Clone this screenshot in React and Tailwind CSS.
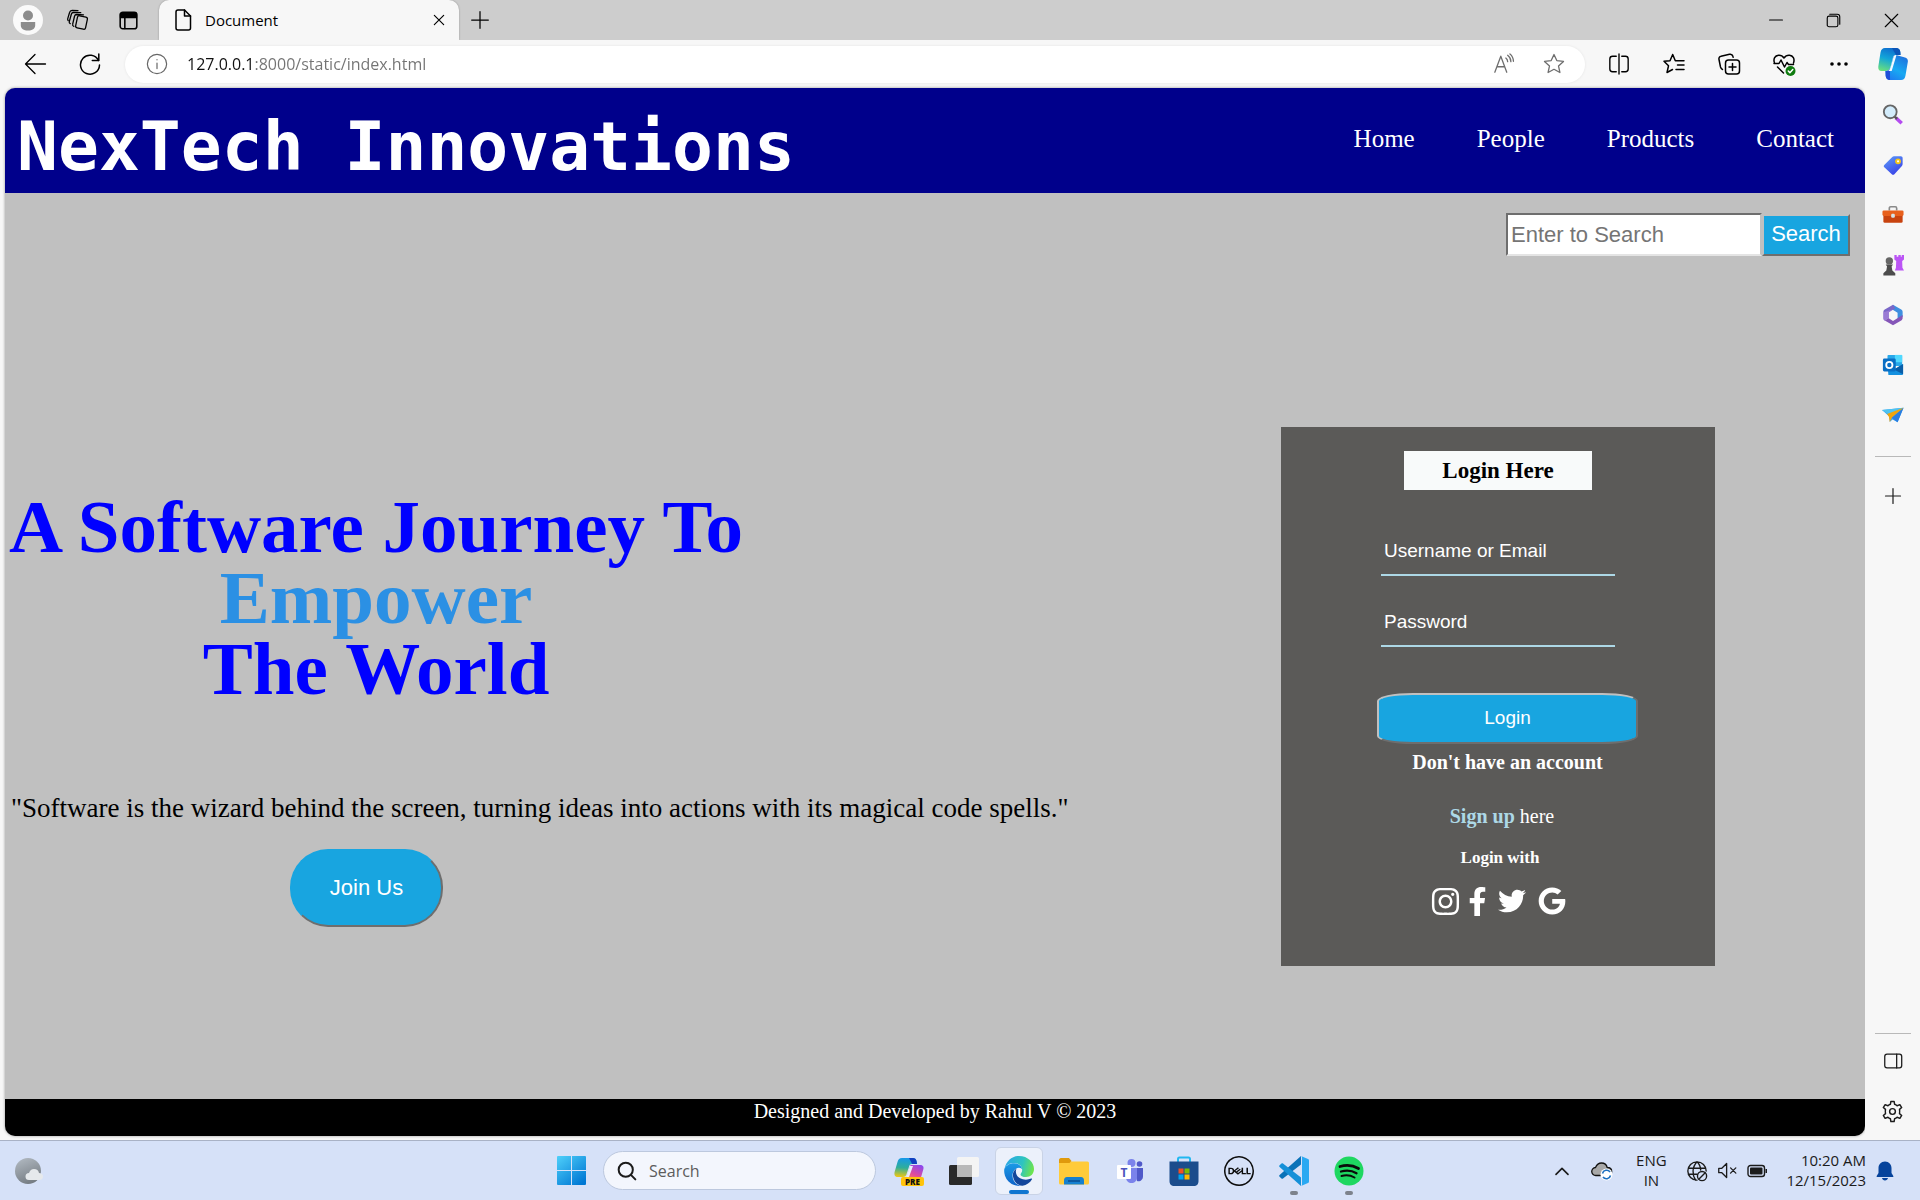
import React from "react";
import { FaInstagram, FaFacebookF, FaTwitter, FaGoogle } from "react-icons/fa";
import { SiDell } from "react-icons/si";

const SANS = "font-['Open_Sans','Noto_Sans',sans-serif]";
const ARIAL = "font-['Liberation_Sans',Arial,sans-serif]";
const TIMES = "font-['Liberation_Serif','Times_New_Roman',serif]";

/* Thin line icon on a 24 unit grid */
function Line({ size = 24, width = 1.4, children, className }) {
  return (
    <svg width={size} height={size} viewBox="0 0 24 24" fill="none" stroke="currentColor" strokeWidth={width} strokeLinecap="round" strokeLinejoin="round" className={className} aria-hidden="true">
      {children}
    </svg>
  );
}

function IconButton({ label, children, className = "" }) {
  return (
    <button type="button" aria-label={label} className={`flex shrink-0 items-center justify-center ${className}`}>
      {children}
    </button>
  );
}

const STAR = "M12 2.5l2.8 6.1 6.7.8-5 4.5 1.4 6.6L12 17.3l-5.9 3.2 1.4-6.6-5-4.5 6.7-.8z";

function TitleBar() {
  return (
    <div className="flex h-10 items-stretch bg-[#cdcdcd] text-black">
      <div className="flex pl-[3px]">
        <IconButton label="Profile" className="w-[50px]">
          <svg width="30" height="30" viewBox="0 0 30 30" aria-hidden="true">
            <circle cx="15" cy="15" r="15" fill="#fafafa" />
            <circle cx="15" cy="10.5" r="5" fill="#8c8c8c" />
            <path d="M7.8 17h14.4v3.5c0 3-3 5-7.200 5s-7.200-2-7.200-5z" fill="#8c8c8c" />
          </svg>
        </IconButton>
        <IconButton label="Workspaces" className="w-[50px]">
          <Line width={1.4} size={22}>
            <rect x="10.500" y="8" width="11" height="13.500" rx="2" transform="rotate(12 16 14)" />
            <path d="M7.500 19c-1.200-.4-1.600-1.300-1.300-2.400l2-8.700c.3-1.100 1.100-1.900 2.300-1.900l7.500.3" />
            <path d="M3.500 16c-1.100-.5-1.300-1.300-1-2.400l2.300-8.100c.3-1 1.100-1.700 2.200-1.700l8 .2" />
            <path d="M1.300 12.500c-.6-.6-.7-1.300-.4-2.300L2.800 3.800C3.200 2.300 4 1.500 5.500 1.500L12 1.700" />
          </Line>
        </IconButton>
        <IconButton label="Tab actions" className="w-[50px]">
          <Line width={1.800} size={21}>
            <rect x="2.500" y="2.500" width="19" height="19" rx="3" />
            <path d="M3 4h18v4.500H3z" fill="currentColor" />
            <path d="M7.800 9v12" />
          </Line>
        </IconButton>
      </div>
      <div className="ml-1.5 flex w-[300px] items-center rounded-t-[10px] bg-[#f7f7f7] pr-2 pl-3 shadow-[0_0_2px_rgba(0,0,0,0.3)]">
        <Line width={1.500}>
          <path d="M5 4a2 2 0 0 1 2-2h6.500L19.500 8v12a2 2 0 0 1-2 2H7a2 2 0 0 1-2-2z" />
          <path d="M13.500 2v6h6" />
        </Line>
        <span className="ml-2.5 flex-1 text-[15px] leading-5">Document</span>
        <IconButton label="Close tab" className="size-6">
          <Line size={14} width={2}>
            <path d="M4 4l16 16M20 4L4 20" />
          </Line>
        </IconButton>
      </div>
      <IconButton label="New tab" className="w-[42px]">
        <Line size={20} width={1.500}>
          <path d="M12 2v20M2 12h20" />
        </Line>
      </IconButton>
      <div className="ml-auto flex">
        <IconButton label="Minimize" className="w-[57px]">
          <Line size={14} width={2}>
            <path d="M1 12h22" />
          </Line>
        </IconButton>
        <IconButton label="Restore" className="w-[58px]">
          <Line size={15} width={1.800}>
            <rect x="2" y="5" width="17" height="17" rx="3" />
            <path d="M6 2h12a4 4 0 0 1 4 4v12" />
          </Line>
        </IconButton>
        <IconButton label="Close" className="w-[58px]">
          <Line size={15} width={1.800}>
            <path d="M2 2l20 20M22 2L2 22" />
          </Line>
        </IconButton>
      </div>
    </div>
  );
}

function CopilotIcon() {
  return (
    <svg width="30" height="32" viewBox="0 0 30 32" aria-hidden="true">
      <defs>
        <linearGradient id="cpA" x1="0.500" y1="0" x2="0.200" y2="1">
          <stop offset="0" stopColor="#0f6fd0" />
          <stop offset="0.450" stopColor="#12a5d8" />
          <stop offset="1" stopColor="#6be07c" />
        </linearGradient>
        <linearGradient id="cpB" x1="0.800" y1="0" x2="0.300" y2="1">
          <stop offset="0" stopColor="#1f6fdc" />
          <stop offset="0.600" stopColor="#18a9f2" />
          <stop offset="1" stopColor="#1e7ff0" />
        </linearGradient>
      </defs>
      <path d="M7 0h11c2.500 0 4 1.500 4.300 4L22.500 7H18c-2 0-2.800 1-3.200 3l-2 8c-.7 3-2 4.500-4.800 5H3.500C1 23 0 21 .3 18.500L2.500 4.500C3 1.500 4.500 0 7 0z" fill="url(#cpA)" />
      <path d="M14 0h4c2.500 0 4 1.500 4.300 4L22.500 7H18z" fill="#0b55b8" />
      <path d="M23 32H12c-2.500 0-4-1.500-4.300-4L7.500 23c3 0 4.500-1.500 5.300-5l2-8c.5-2 1.500-2.800 3.200-3L27 9.500c2 .5 3.200 2 2.800 4.500L27.500 27.500C27 30.500 25.500 32 23 32z" fill="url(#cpB)" />
      <path d="M12 32c-2.500 0-4-1.500-4.300-4L7.500 23c2 0 3.500-.6 4.500-2.500z" fill="#1f4fd8" />
      <path d="M15.500 9c.6-1.500 1.500-2 3-2l-4.800 16h-3.500c1.500-1 2.200-2.800 2.800-5z" fill="#f4faff" />
    </svg>
  );
}

function Toolbar() {
  return (
    <div className="flex h-12 items-center bg-[#f7f7f7] text-black">
      <div className="flex pl-[7px]">
        <IconButton label="Back" className="h-9 w-[55px]">
          <Line width={1.300}>
            <path d="M2.500 12h20M12 2.500L2.500 12l9.500 9.500" />
          </Line>
        </IconButton>
        <IconButton label="Refresh" className="h-9 w-[55px]">
          <Line width={1.500}>
            <path d="M20.500 8.500A9.500 9.500 0 1 0 21.500 13" />
            <path d="M20.800 2v6.500h-6.500" />
          </Line>
        </IconButton>
      </div>
      <div className="ml-2 flex h-[37px] flex-1 items-center rounded-full bg-white pr-1.5 pl-[21px] shadow-[0_0_3px_rgba(0,0,0,0.08)]">
        <Line size={22} width={1.300} className="shrink-0 text-[#666]">
          <circle cx="12" cy="12" r="10.500" />
          <path d="M12 11v6M12 7.200v.2" />
        </Line>
        <input
          type="text"
          aria-label="Address"
          defaultValue="127.0.0.1:8000/static/index.html"
          className="ml-[19px] min-w-0 flex-1 bg-[linear-gradient(90deg,#111_66px,#737373_66px)] bg-clip-text text-[16px] text-transparent outline-none"
        />
        <IconButton label="Read aloud" className="w-[50px] text-[#6e6e6e]">
          <Line size={22} width={1.400}>
            <path d="M2 21 8.500 3.500 15 21M4.500 15h8M14 5.500c1.300 1 2 2.500 2 4M16 2.500c2.300 1.700 3.500 4 3.500 7M18.500 1c2.500 2 3.700 4.800 3.800 8" />
          </Line>
        </IconButton>
        <IconButton label="Add to favourites" className="w-[50px] text-[#6e6e6e]">
          <Line width={1.300}>
            <path d={STAR} />
          </Line>
        </IconButton>
      </div>
      <div className="flex pl-1.5">
        <IconButton label="Split screen" className="w-[55px]">
          <Line width={1.500} size={22}>
            <path d="M9 3.500H5a3 3 0 0 0-3 3v11a3 3 0 0 0 3 3h4M15 3.500h4a3 3 0 0 1 3 3v11a3 3 0 0 1-3 3h-4M12 1v22" />
          </Line>
        </IconButton>
        <IconButton label="Favourites" className="w-[55px]">
          <Line width={1.500}>
            <path d="M13.500 8.700h-.2L10.700 2.500 8 8.700l-6 .6 4.500 4.500L5 20.500l5.500-3M13.500 8.700H22M15.500 13H22M14 17.500h8" />
          </Line>
        </IconButton>
        <IconButton label="Collections" className="w-[55px]">
          <Line width={1.500}>
            <rect x="8.500" y="8" width="14" height="14" rx="3" />
            <path d="M15.500 11.500v7M12 15h7M5.500 17.500C4.300 17 3.800 16 3.500 15L2 7.500C1.600 5.700 2.500 4.500 4 4.200l8.500-1.900c1.700-.3 3 .4 3.400 2l.3 1" />
          </Line>
        </IconButton>
        <IconButton label="Browser essentials" className="w-[55px]">
          <Line width={1.500}>
            <path d="M2.500 11C1 7 3 3.500 6.500 3.200 9 3 11 4.500 12 6c1-1.500 3-3 5.500-2.800C21 3.500 23 7 21.500 11M5.500 15l6 6M2 11.500h5l2-3.500 3.500 7 2.500-4.500 1.500 2h5" />
            <circle cx="18.500" cy="19" r="5" fill="#107c10" stroke="none" />
            <path d="M16.300 19l1.600 1.700 2.900-3.200" stroke="#fff" />
          </Line>
        </IconButton>
        <IconButton label="Settings and more" className="w-[55px]">
          <svg width="18" height="4" viewBox="0 0 18 4" aria-hidden="true">
            <circle cx="2" cy="2" r="1.800" />
            <circle cx="9" cy="2" r="1.800" />
            <circle cx="16" cy="2" r="1.800" />
          </svg>
        </IconButton>
        <IconButton label="Copilot" className="w-[54px]">
          <CopilotIcon />
        </IconButton>
      </div>
    </div>
  );
}

const sideIcons = [
  {
    label: "Search",
    art: (
      <>
        <path d="M15 15l6.500 6" stroke="#b44cf0" strokeWidth="4" />
        <path d="M13.500 13.500l3 2.800" stroke="#555" strokeWidth="2.500" />
        <circle cx="9" cy="8.500" r="7" fill="#d3ecfb" stroke="#666" strokeWidth="2" />
      </>
    ),
  },
  {
    label: "Shopping",
    art: (
      <>
        <path d="M13 2.500h7.500c1.200 0 2 .8 2 2V11c0 .8-.3 1.500-.8 2L13.500 22c-.8.800-2 .8-2.800 0L2.500 14.500c-.8-.8-.7-1.800 0-2.600l8.700-8.700c.5-.5 1.100-.7 1.800-.7z" fill="url(#tagG)" />
        <circle cx="17.500" cy="8" r="2.200" fill="#fff" stroke="#f5c518" strokeWidth="2" />
      </>
    ),
  },
  {
    label: "Tools",
    art: (
      <>
        <path d="M8 7V4.500c0-.8.700-1.500 1.500-1.500h5c.8 0 1.500.7 1.500 1.500V7" fill="none" stroke="#8a8a8a" strokeWidth="1.800" />
        <rect x="1.500" y="11" width="21" height="9.500" rx="1.500" fill="#c8430f" />
        <rect x="0.500" y="7" width="23" height="6" rx="1.500" fill="#e8601c" />
        <rect x="10" y="10.500" width="4" height="4.500" rx="1.500" fill="#d5e3e6" />
      </>
    ),
  },
  {
    label: "Games",
    art: (
      <>
        <path d="M13.500 1h2.500v2h1.800V1h2.700v2h1V1H24v5l-2 1.500.3 7.500 1.700 3H14l1.200-3 .3-7.500-2-1.500z" fill="#bb55f5" />
        <circle cx="8" cy="7.500" r="4" fill="#666" />
        <path d="M4 11.500h8l-1.500 2 .8 4.500 3.200 3v2.500H1.500V21l3.200-3 .8-4.500z" fill="#4c4c4c" />
      </>
    ),
  },
  {
    label: "Microsoft 365",
    art: (
      <>
        <path d="M12 .8 21 6c1 .6 1.500 1.500 1.500 2.600V14l-5.500 3V9.500L9.500 5z" fill="#3f8fe0" />
        <path d="M12 .8 3 6C2 6.600 1.500 7.500 1.500 8.600V15.500c0 1.100.5 2 1.500 2.600l4.500-3V9l7-4.500z" fill="#7a67c8" />
        <path d="M3 18l9 5.300 9-5.300c1-.6 1.500-1.500 1.500-2.600V12L12 18.500l-5-3.300z" fill="#8556b8" />
        <path d="M1.500 9v6.500c0 1.100.5 2 1.500 2.600l4.500-3V9L12 6z" fill="#a884d8" opacity="0.700" />
        <path d="M12 7.800l4 2.200v4.300l-4 2.400-4-2.400V10z" fill="#f7f7f7" />
      </>
    ),
  },
  {
    label: "Outlook",
    art: (
      <>
        <rect x="6" y="1" width="16" height="12" rx="1" fill="#28a8ea" />
        <path d="M14 1h8v8h-8z" fill="#50d9ff" />
        <path d="M6 12l9 4 8-5v10.500c0 .8-.6 1.500-1.500 1.500H7z" fill="#1490df" />
        <path d="M13 17l10-6v11z" fill="#0a5ea8" />
        <rect x="1" y="5" width="14" height="14" rx="1.500" fill="#0a6fc4" />
        <circle cx="8" cy="12" r="3.400" fill="none" stroke="#fff" strokeWidth="2" />
      </>
    ),
  },
  {
    label: "Drop",
    art: (
      <>
        <path d="M0 6.500 23.500 4 17 20l-5.500-3-3 2.500-.5-6z" fill="#35a4f4" />
        <path d="M0 6.500 23.500 4 8 12z" fill="#4fc3f0" />
        <path d="M23.500 4 17 20l-6.500-5z" fill="#2a7de0" />
        <path d="M23.500 4 5.500 11l2 3 1 5.500 2.500-5z" fill="#f0a40a" />
      </>
    ),
  },
];

function SideBar() {
  return (
    <aside aria-label="Sidebar" className="flex w-[55px] shrink-0 flex-col items-center bg-[#f7f7f7] pt-0.5 text-[#1b1b1b]">
      {sideIcons.map((i) => (
        <IconButton key={i.label} label={i.label} className="h-[50px] w-full">
          <svg width="22" height="22" viewBox="0 0 24 24" aria-hidden="true">
            <defs>
              <linearGradient id="tagG" x1="0" y1="0" x2="0.600" y2="1">
                <stop offset="0" stopColor="#5ea0f8" />
                <stop offset="1" stopColor="#3a44e8" />
              </linearGradient>
            </defs>
            {i.art}
          </svg>
        </IconButton>
      ))}
      <hr className="mt-4 w-9 border-[#b9b9b9]" />
      <IconButton label="Customize" className="mt-3.5 h-[50px] w-full">
        <Line size={18} width={1.600}>
          <path d="M12 2v20M2 12h20" />
        </Line>
      </IconButton>
      <hr className="mt-auto w-9 border-[#b9b9b9]" />
      <IconButton label="Hide sidebar" className="mt-0.5 h-[50px] w-full">
        <Line size={22} width={1.400}>
          <rect x="3" y="4.500" width="18.500" height="15" rx="2.500" />
          <path d="M16 4.500v15" />
        </Line>
      </IconButton>
      <IconButton label="Settings" className="h-[50px] w-full">
        <Line size={23} width={1.500}>
          <path d="M9.800 4.500 10.300 1.500h3.400l.5 3c1 .3 1.900.8 2.600 1.500l2.900-1.100 1.900 3-2.300 1.900c.3 1.500.3 2.900 0 4.400l2.300 1.900-1.900 3-2.900-1.100c-.7.7-1.600 1.200-2.600 1.500l-.5 3h-3.400l-.5-3c-1-.3-1.900-.8-2.600-1.500l-2.900 1.100-1.900-3 2.300-1.900c-.3-1.500-.3-2.900 0-4.400L2.400 7.900l1.900-3L7.200 6c.7-.7 1.600-1.200 2.600-1.500z" />
          <circle cx="12" cy="12" r="3" />
        </Line>
      </IconButton>
    </aside>
  );
}

function LoginPanel() {
  return (
    <form onSubmit={(e) => e.preventDefault()} className={`mt-[171px] mr-[150px] flex w-[434px] shrink-0 flex-col items-center self-start bg-[#5b5a58] pt-6 pb-[49px] text-white ${TIMES}`}>
      <h2 className="w-[188px] bg-[#f8fafa] text-center text-[23px] leading-[39px] font-bold text-black">Login Here</h2>
      <input type="text" aria-label="Username or Email" placeholder="Username or Email" className={`mt-9 h-[50px] w-[234px] border-b-2 border-[#add8e6] bg-transparent px-[3px] pt-0.5 text-[19px] placeholder-white outline-none ${ARIAL}`} />
      <input type="password" aria-label="Password" placeholder="Password" className={`mt-[21px] h-[50px] w-[234px] border-b-2 border-[#add8e6] bg-transparent px-[3px] pt-0.5 text-[19px] placeholder-white outline-none ${ARIAL}`} />
      <div className="mt-[46px] ml-[19px] flex flex-col items-center">
        <button type="submit" className={`h-[51px] w-[261px] rounded-[36px/8px] border-2 border-t-[#c0c0c0] border-r-[#6e6e6e] border-b-[#6e6e6e] border-l-[#c0c0c0] bg-[#18a5e0] text-[19px] ${ARIAL}`}>Login</button>
        <p className="mt-1.5 text-[20px] leading-6 font-bold">Don't have an account</p>
      </div>
      <p className="mt-[30px] ml-2 text-[20px] leading-6">
        <a href="#signup" className="font-bold text-[#add8e6]">Sign up</a> here
      </p>
      <p className="mt-[18px] ml-1 text-[17px] leading-6 font-bold">Login with</p>
      <div className="mt-[15px] flex h-8 items-center gap-2">
        <a href="#instagram" aria-label="Instagram"><FaInstagram size={31} /></a>
        <a href="#facebook" aria-label="Facebook"><FaFacebookF size={29} className="-mx-1.5" /></a>
        <a href="#twitter" aria-label="Twitter" className="ml-1"><FaTwitter size={28} /></a>
        <a href="#google" aria-label="Google" className="ml-1"><FaGoogle size={28} /></a>
      </div>
    </form>
  );
}

function Page() {
  return (
    <div className={`flex min-w-0 flex-1 flex-col overflow-hidden rounded-[10px] bg-[#c0c0c0] shadow-[0_0_3px_rgba(0,0,0,0.4)] ${TIMES}`}>
      <header className="flex h-[105px] items-center justify-between bg-[#00008b] pr-[31px] pl-3 text-white">
        <h1 className="pt-3 font-['DejaVu_Sans_Mono',monospace] text-[68px] leading-[80px] font-bold">NexTech Innovations</h1>
        <nav className="flex gap-[62px] pb-1 text-[25px] leading-7">
          <a href="#home">Home</a>
          <a href="#people">People</a>
          <a href="#products">Products</a>
          <a href="#contact">Contact</a>
        </nav>
      </header>
      <main className="flex flex-1 flex-col">
        <form onSubmit={(e) => e.preventDefault()} className={`mt-5 flex items-center justify-end pr-[15px] text-[22px] ${ARIAL}`}>
          <input type="text" aria-label="Enter to Search" placeholder="Enter to Search" className="h-[43px] w-[256px] border-2 border-t-[#6e6e6e] border-r-[#c0c0c0] border-b-[#e4e4e4] border-l-[#6e6e6e] bg-white px-[3px] placeholder-[#757575] outline-none" />
          <button type="submit" className="h-[42px] w-[88px] border-2 border-t-[#c0c0c0] border-r-[#6e6e6e] border-b-[#6e6e6e] border-l-[#c0c0c0] bg-[#18a5e0] pb-0.5 leading-8 text-white">Search</button>
        </form>
        <div className="flex flex-1 justify-between">
          <section className="mt-[235px]">
            <h2 className="ml-1 w-fit text-center text-[75px] leading-[71px] font-bold text-[#0000ff]">
              A Software Journey To
              <br />
              <span className="text-[#2b90e4]">Empower</span>
              <br />
              The World
            </h2>
            <p className="mt-[88px] ml-[6px] text-[27px] leading-8 text-black">"Software is the wizard behind the screen, turning ideas into actions with its magical code spells."</p>
            <button type="button" className={`mt-[25px] ml-[285px] h-[78px] w-[153px] rounded-[38px] border-2 border-t-[#18a5e0] border-r-[#6e6e6e] border-b-[#6e6e6e] border-l-[#18a5e0] bg-[#18a5e0] pb-0.5 text-[22px] text-white ${ARIAL}`}>Join Us</button>
          </section>
          <LoginPanel />
        </div>
      </main>
      <footer className="h-[37px] bg-black text-center text-[20px] leading-6 text-white">Designed and Developed by Rahul V © 2023</footer>
    </div>
  );
}

const apps = [
  {
    label: "Copilot preview",
    art: (
      <>
        <defs>
          <linearGradient id="prA" x1="0.300" y1="0" x2="0.200" y2="1">
            <stop offset="0" stopColor="#1798e8" />
            <stop offset="0.500" stopColor="#2fae9a" />
            <stop offset="1" stopColor="#f2c811" />
          </linearGradient>
          <linearGradient id="prB" x1="0.800" y1="0" x2="0.200" y2="1">
            <stop offset="0" stopColor="#8c48ee" />
            <stop offset="0.600" stopColor="#e04c9c" />
            <stop offset="1" stopColor="#ff8450" />
          </linearGradient>
        </defs>
        <path d="M8 2h11c2 0 3 1 3.500 3l.6 3h-5c-2 0-2.700 1-3.200 3l-2 6c-.8 3-2 4-4 4H4c-3 0-4-2-3.400-5L3.500 6C4.200 3.400 5.400 2 8 2z" fill="url(#prA)" />
        <path d="M15 2h4c2 0 3 1 3.500 3l.6 3h-5z" fill="#123fc0" />
        <path d="M16.500 9H26c3 0 4 2 3.400 4l-2 7c-.7 2.600-2.400 3.500-4.400 3.500H10c2-1 3-2.500 3.500-4.500z" fill="url(#prB)" />
        <path d="M16 10h3l-4 11h-2.500z" fill="#e8effc" />
        <rect x="7" y="21" width="23" height="9" rx="2" fill="#ffc40c" />
        <text x="18.500" y="28.500" textAnchor="middle" fontSize="8" fontWeight="800" fontFamily="Open Sans, sans-serif" fill="#111">PRE</text>
      </>
    ),
  },
  {
    label: "Task view",
    art: (
      <>
        <rect x="0" y="9" width="23" height="20" rx="1.500" fill="#2a2a2a" />
        <rect x="8" y="1" width="22" height="20" rx="1.500" fill="#f4f4f4" />
        <path d="M8 9h15v12H8z" fill="#b9b9b9" />
      </>
    ),
  },
  {
    label: "Edge",
    active: true,
    art: (
      <>
        <defs>
          <linearGradient id="edA" x1="0" y1="0.300" x2="1" y2="0.500">
            <stop offset="0" stopColor="#2aa6e8" />
            <stop offset="0.600" stopColor="#2ec4c0" />
            <stop offset="1" stopColor="#6ee44c" />
          </linearGradient>
          <linearGradient id="edB" x1="0.500" y1="0" x2="0.500" y2="1">
            <stop offset="0" stopColor="#1a9be6" />
            <stop offset="1" stopColor="#0f62c8" />
          </linearGradient>
        </defs>
        <path d="M.5 13C2 5 8 0 15 0c9 0 15 6.500 15 13 0 5-3.500 8-8 8-3.500 0-5.500-1.300-5.500-2.600 0-1 1.700-1.700 1.700-4.400C18.200 9.500 14 7 9.500 7 5 7 2 9.500.5 13z" fill="url(#edA)" />
        <path d="M.3 13C2.500 9 6 7.300 10 7.300c4.500 0 8 2.700 8.200 6.200-.5-1-1.700-1.700-3.200-1.700-4 0-6.500 4-6.500 8 0 5 3.500 9 8.500 10A15 15 0 0 1 .3 13z" fill="url(#edB)" />
        <path d="M12.500 12.500c-3 2-4 5-3.500 8 .8 5.500 5 9.400 9.500 9.200 4-.7 7.500-3 9.500-6.500.3-.6-.3-1-.8-.7-5.700 2.600-12.700.5-14.700-4-.9-2-.8-4.300 0-6z" fill="#12469c" />
      </>
    ),
  },
  {
    label: "File Explorer",
    art: (
      <>
        <rect x="0" y="5.500" width="30" height="23" rx="1.500" fill="#ffcb3a" />
        <path d="M0 4c0-1 .7-2 2-2h8l2.500 3-2 2H0z" fill="#e09a0c" />
        <path d="M5 28.500v-4c0-2 1-3.500 3-3.500h14c2 0 3 1.500 3 3.500v4z" fill="#1580d0" />
        <path d="M9 25h12" stroke="#0a4c90" strokeWidth="1.500" />
      </>
    ),
  },
  {
    label: "Teams",
    art: (
      <>
        <circle cx="17.500" cy="7" r="4" fill="#7b83eb" />
        <circle cx="25.500" cy="8" r="2.800" fill="#5059c9" />
        <path d="M20 12h9v8c0 4-3 6-6 5z" fill="#5059c9" />
        <path d="M12 12h11v9c0 4-2.500 6-5.500 6S12 25 12 21z" fill="#7b83eb" />
        <rect x="3" y="9" width="14" height="14" rx="1" fill="#fff" />
        <text x="10" y="20.500" textAnchor="middle" fontSize="12" fontWeight="700" fontFamily="Open Sans, sans-serif" fill="#4b53bc">T</text>
      </>
    ),
  },
  {
    label: "Microsoft Store",
    art: (
      <>
        <path d="M9 6V3c0-1 .5-1.500 1.500-1.500h9c1 0 1.500.5 1.500 1.500v3" fill="none" stroke="#22b8f0" strokeWidth="2" />
        <path d="M.5 5.500h29V25c0 3-1.500 5-5 5h-19c-3.500 0-5-2-5-5z" fill="#1b4c8c" />
        <path d="M9.500 12.500h5v5h-5z" fill="#f25022" />
        <path d="M15.500 12.500h5v5h-5z" fill="#7fba00" />
        <path d="M9.500 18.500h5v5h-5z" fill="#00a4ef" />
        <path d="M15.500 18.500h5v5h-5z" fill="#ffb900" />
      </>
    ),
  },
  { label: "Dell", icon: <SiDell size={30} color="#0c0c0c" /> },
  {
    label: "Visual Studio Code",
    running: true,
    art: (
      <>
        <path d="M22 0v8.500L4 22.500c-.5.400-1 .4-1.500 0L.6 20.800c-.6-.5-.6-1.200 0-1.700z" fill="#0a72b8" />
        <path d="M22 30v-8.500L4 7.500c-.5-.4-1-.4-1.500 0L.6 9.200c-.6.5-.6 1.200 0 1.700z" fill="#1590d8" />
        <path d="M22 0l7 3c.7.3 1 .8 1 1.500v21c0 .7-.3 1.200-1 1.500l-7 3c1-.5 1-1 1-2V2c0-1 0-1.500-1-2z" fill="#2aa9f2" />
      </>
    ),
  },
  {
    label: "Spotify",
    running: true,
    art: (
      <>
        <circle cx="15" cy="15" r="14.500" fill="#1ed760" />
        <path d="M6 10.500c6-1.700 13-1.200 18.500 2" fill="none" stroke="#0a0a0a" strokeWidth="2.800" strokeLinecap="round" />
        <path d="M7 15.500c5.500-1.500 11-1 15.500 1.700" fill="none" stroke="#0a0a0a" strokeWidth="2.300" strokeLinecap="round" />
        <path d="M7.500 20c4.500-1.200 9-.8 13 1.500" fill="none" stroke="#0a0a0a" strokeWidth="2" strokeLinecap="round" />
      </>
    ),
  },
];

function Taskbar() {
  return (
    <footer className="grid h-[60px] grid-cols-[1fr_auto_1fr] items-center border-t border-[#a9b2c6] bg-[#d6e1f8] text-[#1b1b1b]">
      <IconButton label="Weather" className="ml-[13px] size-8 justify-self-start">
        <svg width="30" height="28" viewBox="0 0 30 28" aria-hidden="true">
          <defs>
            <linearGradient id="moon" x1="0.200" y1="0" x2="0.600" y2="1">
              <stop offset="0" stopColor="#b0b8c0" />
              <stop offset="1" stopColor="#747b82" />
            </linearGradient>
          </defs>
          <circle cx="14" cy="14" r="13" fill="url(#moon)" />
          <path d="M15 23a3.500 3.500 0 0 1 0-7c1-2.500 2.500-4 5-4 2.800 0 4.500 1.500 5 4 2.300 0 4 1.500 4 3.500S27.500 23 25.500 23z" fill="#e6e9ec" />
        </svg>
      </IconButton>
      <div className="flex items-center">
        <IconButton label="Start" className="h-12 w-[55px]">
          <svg width="29" height="29" viewBox="0 0 29 29" aria-hidden="true">
            <defs>
              <linearGradient id="win" x1="0" y1="0" x2="0.800" y2="1">
                <stop offset="0" stopColor="#4fd0fa" />
                <stop offset="1" stopColor="#0078d4" />
              </linearGradient>
            </defs>
            <path d="M0 1q0-1 1-1h13v14H0zM15 0h13q1 0 1 1v13H15zM0 15h14v14H1q-1 0-1-1zM15 15h14v13q0 1-1 1H15z" fill="url(#win)" />
          </svg>
        </IconButton>
        <label className="mr-[5px] ml-1 flex h-[39px] w-[273px] items-center rounded-full border border-[#bcc8de] bg-[#f3f6fd] pl-[13px]">
          <Line size={20} width={2.400}>
            <circle cx="10.500" cy="10.500" r="8.500" />
            <path d="M17 17l5 5" />
          </Line>
          <input type="text" aria-label="Taskbar search" placeholder="Search" className="ml-3 min-w-0 flex-1 bg-transparent text-[16px] placeholder-[#5c5c5c] outline-none" />
        </label>
        {apps.map((a) => (
          <button key={a.label} type="button" aria-label={a.label} className="flex w-[55px] items-center justify-center">
            <span className={`relative flex size-12 items-center justify-center rounded-md ${a.active ? "border border-[#c9d3e6] bg-[#ecf1fb]" : ""}`}>
              {a.icon || (
                <svg width="30" height="30" viewBox="0 0 30 30" aria-hidden="true">
                  {a.art}
                </svg>
              )}
              {a.active && <span className="absolute bottom-0 h-1 w-5 rounded-full bg-[#0f75d0]" />}
              {a.running && <span className="absolute bottom-0 h-1 w-2 rounded-full bg-[#7d828c]" />}
            </span>
          </button>
        ))}
      </div>
      <div className="flex items-center justify-self-end text-[15px] leading-5">
        <IconButton label="Show hidden icons" className="w-10">
          <Line size={16} width={2.500}>
            <path d="M3 17l9-9 9 9" />
          </Line>
        </IconButton>
        <IconButton label="OneDrive" className="w-10">
          <svg width="22" height="20" viewBox="0 0 22 20" aria-hidden="true">
            <path d="M5 14.500a4 4 0 0 1-.5-8C6 3 8 2 10.500 2c3 0 5 1.500 5.700 4.500 2.800 0 4.500 1.700 4.500 4s-1.500 4-4 4z" fill="#a8a8a8" stroke="#111" strokeWidth="1.300" />
            <circle cx="15.500" cy="13.500" r="6" fill="#fff" />
            <path d="M11.500 12.500a4.200 4.200 0 0 1 7.500-1.500M19.500 14.500a4.200 4.200 0 0 1-7.500 1.500" fill="none" stroke="#1b6fc0" strokeWidth="1.600" />
          </svg>
        </IconButton>
        <button type="button" className="ml-1 w-[50px] pb-0.5 text-center">
          ENG
          <br />
          IN
        </button>
        <button type="button" aria-label="Network, volume and battery" className="ml-2.5 flex items-center gap-[9px]">
          <Line size={22} width={1.500}>
            <path d="M12 22A10 10 0 1 1 22 12M2.500 9h19M2.500 15.500H12M12 2C6.500 8 6.500 16 10.500 22M12 2c2.500 2.500 4 6 4 9" />
            <circle cx="17.500" cy="17.500" r="5" />
            <path d="M14.200 20.800l6.500-6.500" />
          </Line>
          <Line size={21} width={1.500}>
            <path d="M2 9.500h3.500L11 4v16l-5.500-5.500H2zM15.500 9l6 6M21.500 9l-6 6" />
          </Line>
          <svg width="21" height="14" viewBox="0 0 21 14" aria-hidden="true">
            <rect x="1" y="1.500" width="16.500" height="11" rx="2.500" fill="none" stroke="#1b1b1b" strokeWidth="1.400" />
            <rect x="3" y="3.500" width="12.500" height="7" rx="1" fill="#1b1b1b" />
            <path d="M18.500 5h1.500v4h-1.500z" fill="#1b1b1b" />
          </svg>
        </button>
        <button type="button" className="ml-[18px] pb-0.5 text-right">
          10:20 AM
          <br />
          12/15/2023
        </button>
        <IconButton label="Notifications" className="mr-[25px] ml-[9px] w-5">
          <svg width="18" height="20" viewBox="0 0 18 20" aria-hidden="true">
            <path d="M9 .5c4 0 6.500 3 6.500 6.500v5l1.800 3c.3.600 0 1-.6 1H1.300c-.6 0-.9-.4-.6-1L2.500 12V7C2.500 3.500 5 .5 9 .5zM6 17h6c-.3 1.500-1.500 2.500-3 2.500S6.300 18.500 6 17z" fill="#07449c" />
          </svg>
        </IconButton>
      </div>
    </footer>
  );
}

export default function App() {
  return (
    <div className={`flex min-h-screen flex-col bg-[#f7f7f7] ${SANS}`}>
      <TitleBar />
      <Toolbar />
      <div className="flex flex-1 pb-1 pl-[5px]">
        <Page />
        <SideBar />
      </div>
      <Taskbar />
    </div>
  );
}
